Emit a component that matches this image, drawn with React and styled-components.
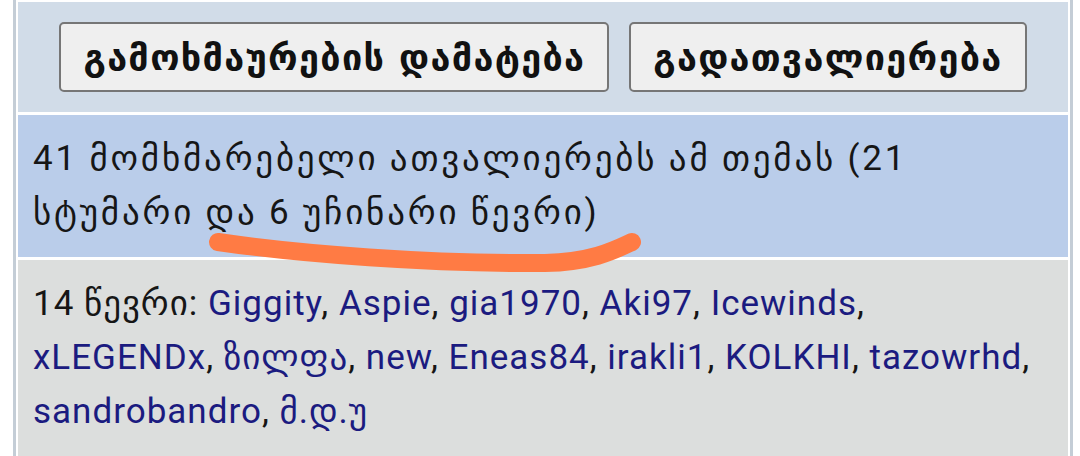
import styled, { createGlobalStyle } from "styled-components";

const GlobalStyle = createGlobalStyle`
  body {
    margin: 0;
    background: #fff;
    font-family: Roboto, "DejaVu Sans", sans-serif;
  }
`;

const members = [
  "Giggity",
  "Aspie",
  "gia1970",
  "Aki97",
  "Icewinds",
  "xLEGENDx",
  "ზილფა",
  "new",
  "Eneas84",
  "irakli1",
  "KOLKHI",
  "tazowrhd",
  "sandrobandro",
  "მ.დ.უ",
];

function App() {
  return (
    <>
      <GlobalStyle />
      <Frame>
        <Toolbar>
          <ActionButton>გამოხმაურების დამატება</ActionButton>
          <ActionButton>გადათვალიერება</ActionButton>
        </Toolbar>
        <InfoRow $bg="#bacdea" $spacing={2.8}>
          41 მომხმარებელი ათვალიერებს ამ თემას (21 სტუმარი და 6 უჩინარი წევრი)
        </InfoRow>
        <InfoRow $bg="#dcdedd" $spacing={1} $grow>
          14 წევრი:{" "}
          {members.map((name, i) => (
            <span key={name}>
              <MemberLink href="#">{name}</MemberLink>
              {i < members.length - 1 ? ", " : ""}
            </span>
          ))}
        </InfoRow>
        <Scribble width="1080" height="456" viewBox="0 0 1080 456">
          <path
            d="M218 242 C 300 254, 430 264, 545 263 C 592 262, 615 250, 632 242"
            fill="none"
            stroke="#ff7b44"
            strokeWidth="18"
            strokeLinecap="round"
          />
        </Scribble>
      </Frame>
    </>
  );
}

const Frame = styled.div`
  position: relative;
  margin-left: 13px;
  width: 1050px;
  min-height: 454px;
  padding: 2px 2px 0;
  border-left: 3px solid #c4cdd6;
  border-right: 3px solid #c4cdd6;
  display: flex;
  flex-direction: column;
  gap: 3px;
`;

const Toolbar = styled.div`
  background: #d1dce8;
  display: flex;
  justify-content: center;
  gap: 20px;
  padding: 20px 0;
`;

const ActionButton = styled.button`
  height: 70px;
  padding: 0 22px;
  background: #efefef;
  border: 2px solid #767676;
  border-radius: 5px;
  font-family: "DejaVu Sans", sans-serif;
  font-weight: bold;
  font-size: 36px;
  letter-spacing: 1.3px;
  color: #111;
`;

const InfoRow = styled.div`
  background: ${(p) => p.$bg};
  padding: 17px 15px;
  font-size: 35px;
  letter-spacing: ${(p) => p.$spacing}px;
  line-height: 54px;
  color: #161616;
  flex: ${(p) => (p.$grow ? 1 : "none")};
`;

const MemberLink = styled.a`
  color: #1b1b80;
  text-decoration: none;
`;

const Scribble = styled.svg`
  position: absolute;
  left: -16px;
  top: 0;
  pointer-events: none;
`;

export default App;
